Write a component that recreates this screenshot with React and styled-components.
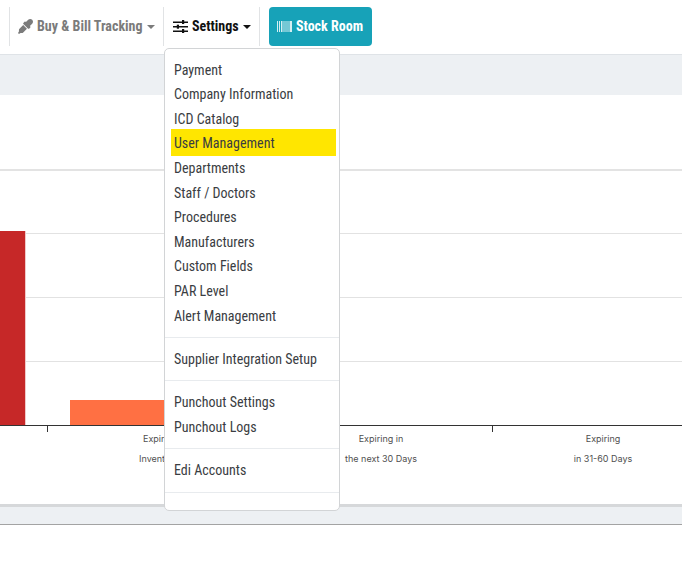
import React from "react";
import styled, { createGlobalStyle } from "styled-components";
import { FaEyeDropper } from "react-icons/fa";

const Global = createGlobalStyle`
  html, body { margin: 0; padding: 0; background: #fff; }
  body { width: 682px; height: 574px; overflow: hidden; font-family: Roboto, "Liberation Sans", sans-serif; font-stretch: 87%; }
`;

const Page = styled.div`
  position: relative;
  width: 682px;
  height: 574px;
  overflow: hidden;
  display: flex;
  flex-direction: column;
`;

const Navbar = styled.header`
  height: 55px;
  box-sizing: border-box;
  border-bottom: 1px solid #dfe3e7;
  padding: 7px 0 0 9px;
  display: flex;
  align-items: flex-start;
`;

const NavItem = styled.div`
  height: 39px;
  box-sizing: border-box;
  width: ${(p) => p.$width}px;
  border-left: 1px solid #e1e3e5;
  padding: 0 0 1px ${(p) => p.$pad}px;
  display: flex;
  align-items: center;
  font-size: 14px;
  font-weight: 700;
  color: ${(p) => p.$color};
  svg { flex: none; }
`;

const NavLabel = styled.span`
  margin-left: 4px;
  white-space: nowrap;
`;

const Caret = styled.i`
  width: 0;
  height: 0;
  margin-left: 4px;
  margin-top: 1px;
  border-left: 4px solid transparent;
  border-right: 4px solid transparent;
  border-top: 4px solid currentColor;
`;

const StockButton = styled.button`
  width: 103px;
  height: 39px;
  margin-left: 9px;
  border: 0;
  border-radius: 4px;
  background: #17a2b8;
  color: #fff;
  font: 700 14px Roboto, "Liberation Sans", sans-serif;
  font-stretch: 87%;
  display: flex;
  align-items: center;
  padding: 0 0 1px 8px;
`;

const Band = styled.div`
  height: 40px;
  flex: none;
  background: #edf0f3;
`;

const Summary = styled.div`
  height: 74px;
  flex: none;
  border-bottom: 2px solid #e3e3e3;
`;

const Chart = styled.svg`
  display: block;
  flex: none;
  width: 682px;
  height: 333px;
`;

const ChartLabel = styled.text`
  font-family: Inter, "Liberation Sans", sans-serif;
  font-stretch: 100%;
  font-size: 9px;
  fill: #4f4f4f;
  text-anchor: middle;
`;

const FooterBand = styled.div`
  height: 17px;
  flex: none;
  border-top: 3px solid #d6d8da;
  border-bottom: 1px solid #a3a3a3;
  background: #edf0f3;
`;

const Menu = styled.nav`
  position: absolute;
  left: 164px;
  top: 48px;
  width: 176px;
  height: 463px;
  box-sizing: border-box;
  padding: 8.7px 3px 0 6px;
  background: #fff;
  border: 1px solid #d2d4d6;
  border-radius: 5px;
`;

const MenuItem = styled.div`
  height: 24.6px;
  line-height: 24.6px;
  margin-top: ${(p) => (p.$active ? "-2px" : "0")};
  padding-top: ${(p) => (p.$active ? "2px" : "0")};
  padding-left: 3px;
  font-size: 14px;
  color: #3a3d42;
  white-space: nowrap;
  background: ${(p) => (p.$active ? "#ffe600" : "transparent")};
`;

const MenuDivider = styled.hr`
  height: 1px;
  border: 0;
  margin: ${(p) => (p.$last ? "9.6px" : "8.8px")} -3px 8.8px -6px;
  background: #e8ebee;
`;

const groups = [
  ["Payment", "Company Information", "ICD Catalog", "User Management", "Departments", "Staff / Doctors", "Procedures", "Manufacturers", "Custom Fields", "PAR Level", "Alert Management"],
  ["Supplier Integration Setup"],
  ["Punchout Settings", "Punchout Logs"],
  ["Edi Accounts"],
];

const SlidersIcon = () => (
  <svg width="15" height="13" viewBox="0 0 15 13">
    <g stroke="#111" strokeWidth="1.4" fill="none">
      <path d="M0 2.2h15M0 6.7h15M0 11.2h15" />
    </g>
    <g fill="#111">
      <rect x="9" y="0" width="2.2" height="4" />
      <rect x="3.8" y="4.7" width="2.2" height="4" />
      <rect x="9" y="9" width="2.2" height="4" />
    </g>
  </svg>
);

const BarcodeIcon = () => (
  <svg width="15" height="11" viewBox="0 0 15 11">
    <path fill="#d5eef2" d="M0 0h1v11H0zM2 0h1v11H2zM4 0h1.5v11H4zM6.5 0h1v11h-1zM8.5 0h1v11h-1zM10.5 0h1v11h-1zM12.5 0H15v11h-2.5z" />
  </svg>
);

const gridY = [62, 126, 190];
const axisY = 254;

export default function App() {
  return (
    <Page>
      <Global />
      <Navbar>
        <NavItem $width={154} $pad={8} $color="#7b7b7b">
          <FaEyeDropper size={15} />
          <NavLabel>Buy &amp; Bill Tracking</NavLabel>
          <Caret />
        </NavItem>
        <NavItem $width={96} $pad={9} $color="#111">
          <SlidersIcon />
          <NavLabel>Settings</NavLabel>
          <Caret />
        </NavItem>
        <NavItem $width={1} $pad={0} $color="#111" />
        <StockButton>
          <BarcodeIcon />
          <NavLabel>Stock Room</NavLabel>
        </StockButton>
      </Navbar>
      <Band />
      <Summary />
      <Chart viewBox="0 0 682 333">
        {gridY.map((y) => (
          <line key={y} x1="0" x2="682" y1={y + 0.5} y2={y + 0.5} stroke="#e2e2e2" />
        ))}
        <rect x="0" y="60" width="25" height="194" fill="#c62828" />
        <rect x="25" y="60" width="1" height="194" fill="#f0c9c9" />
        <rect x="70" y="229" width="110" height="25" fill="#ff7043" />
        <line x1="0" x2="682" y1={axisY + 0.5} y2={axisY + 0.5} stroke="#333" />
        {[47.5, 270.5, 492.5].map((x) => (
          <line key={x} x1={x} x2={x} y1={axisY} y2={axisY + 7} stroke="#333" />
        ))}
        <ChartLabel x="159" y="271">Expired</ChartLabel>
        <ChartLabel x="159" y="291">Inventory</ChartLabel>
        <ChartLabel x="381" y="271">Expiring in</ChartLabel>
        <ChartLabel x="381" y="291">the next 30 Days</ChartLabel>
        <ChartLabel x="603" y="271">Expiring</ChartLabel>
        <ChartLabel x="603" y="291">in 31-60 Days</ChartLabel>
      </Chart>
      <FooterBand />
      <Menu>
        {groups.map((items, i) => (
          <React.Fragment key={i}>
            {items.map((t) => (
              <MenuItem key={t} $active={t === "User Management"}>{t}</MenuItem>
            ))}
            <MenuDivider $last={i === groups.length - 1} />
          </React.Fragment>
        ))}
      </Menu>
    </Page>
  );
}
